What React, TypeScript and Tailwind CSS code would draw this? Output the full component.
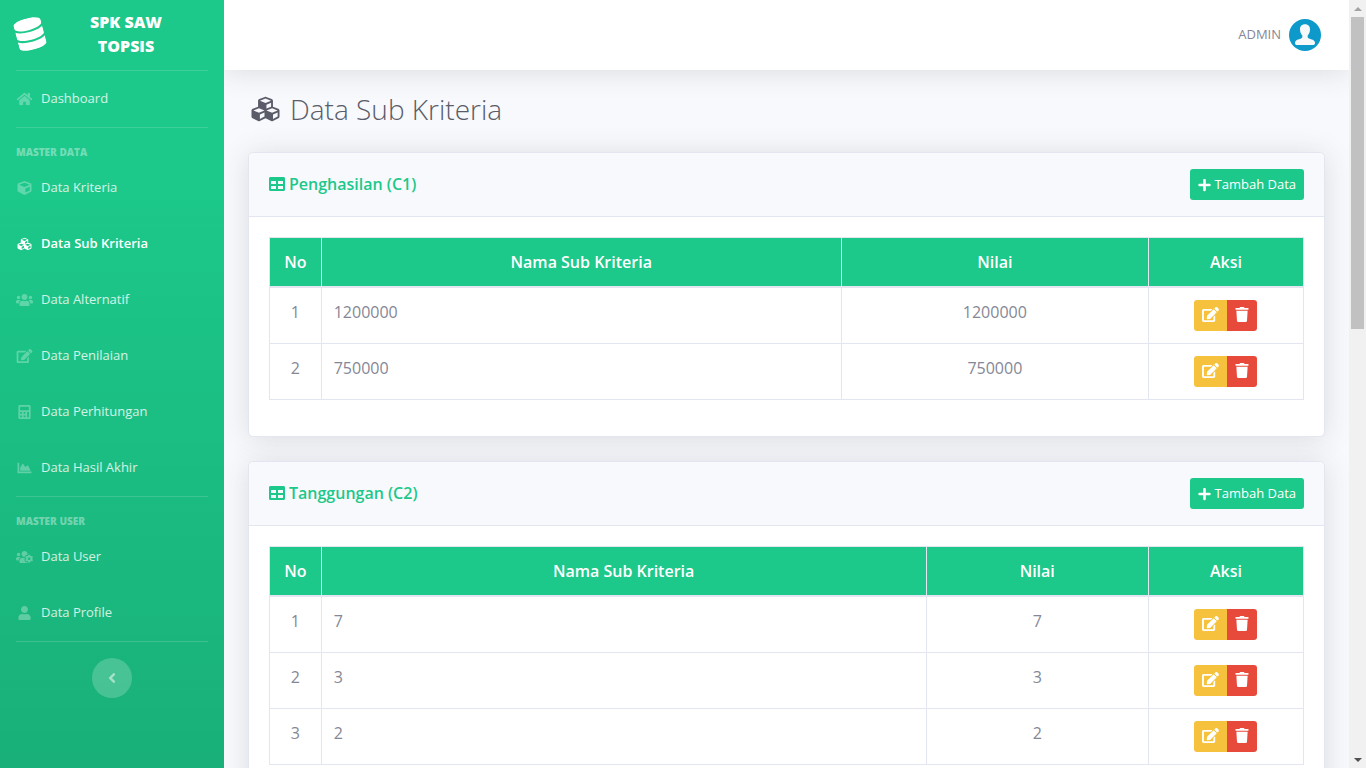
import type { ReactNode } from "react";
import type { IconType } from "react-icons";
import {
  FaAngleLeft,
  FaCalculator,
  FaChartArea,
  FaCube,
  FaCubes,
  FaDatabase,
  FaEdit,
  FaHome,
  FaPlus,
  FaTable,
  FaTrash,
  FaUser,
  FaUsers,
  FaUsersCog,
} from "react-icons/fa";

type SubKriteria = { nama: string; nilai: string };

type Kriteria = {
  title: string;
  namaCol: string;
  rows: SubKriteria[];
};

const kriteria: Kriteria[] = [
  {
    title: "Penghasilan (C1)",
    namaCol: "w-[50.3%]",
    rows: [
      { nama: "1200000", nilai: "1200000" },
      { nama: "750000", nilai: "750000" },
    ],
  },
  {
    title: "Tanggungan (C2)",
    namaCol: "w-[58.5%]",
    rows: [
      { nama: "7", nilai: "7" },
      { nama: "3", nilai: "3" },
      { nama: "2", nilai: "2" },
    ],
  },
];

function Divider() {
  return <hr className="mx-4 border-white/15" />;
}

function Heading({ children }: { children: ReactNode }) {
  return (
    <div className="mt-4 px-4 text-[10px] leading-4 font-extrabold text-white/40 uppercase">
      {children}
    </div>
  );
}

function NavItem({ icon: Icon, label, active = false }: { icon: IconType; label: string; active?: boolean }) {
  return (
    <li>
      <a
        href="#"
        className={
          active
            ? "flex h-14 items-center gap-2 px-4 text-[13px] font-semibold text-white"
            : "flex h-14 items-center gap-2 px-4 text-[13px] text-white/80"
        }
      >
        <Icon className={active ? "h-[14px] w-[17px]" : "h-[14px] w-[17px] text-white/30"} />
        {label}
      </a>
    </li>
  );
}

function Sidebar() {
  return (
    <nav className="w-56 shrink-0 bg-[linear-gradient(180deg,#1cc88a_24%,#19b079_100%)]">
      <a href="#" className="flex h-[70px] items-center px-4 pb-0.5 text-white">
        <FaDatabase className="h-8 w-7 shrink-0 -rotate-15" />
        <span className="mx-4 w-[132px] text-center text-base leading-6 font-extrabold uppercase">
          SPK SAW TOPSIS
        </span>
      </a>
      <Divider />
      <ul>
        <NavItem icon={FaHome} label="Dashboard" />
      </ul>
      <Divider />
      <Heading>Master Data</Heading>
      <ul>
        <NavItem icon={FaCube} label="Data Kriteria" />
        <NavItem icon={FaCubes} label="Data Sub Kriteria" active />
        <NavItem icon={FaUsers} label="Data Alternatif" />
        <NavItem icon={FaEdit} label="Data Penilaian" />
        <NavItem icon={FaCalculator} label="Data Perhitungan" />
        <NavItem icon={FaChartArea} label="Data Hasil Akhir" />
      </ul>
      <Divider />
      <Heading>Master User</Heading>
      <ul>
        <NavItem icon={FaUsersCog} label="Data User" />
        <NavItem icon={FaUser} label="Data Profile" />
      </ul>
      <Divider />
      <button
        type="button"
        aria-label="Toggle sidebar"
        className="mx-auto mt-4 flex size-10 items-center justify-center rounded-full bg-white/20 text-white/50"
      >
        <FaAngleLeft className="size-4" />
      </button>
    </nav>
  );
}

function Avatar() {
  return (
    <svg viewBox="0 0 32 32" className="size-8">
      <circle cx="16" cy="16" r="16" fill="#0d9acb" />
      <path
        fill="#f7f8fa"
        d="M16 5.2c-3.4 0-5.3 2.4-5 5.6.2 2.400.9 4.300 2.300 5.700.3 1.500-.1 2.500-1.300 3-2.600 1.100-5.300 1.400-5.900 3.500-.3 1.200 0 2.200.9 3h18c.9-.8 1.200-1.800.9-3-.6-2.100-3.300-2.400-5.900-3.500-1.200-.5-1.600-1.500-1.300-3 1.400-1.400 2.100-3.300 2.300-5.700.3-3.200-1.600-5.600-5-5.600z"
      />
    </svg>
  );
}

function Topbar() {
  return (
    <header className="relative flex h-[70px] shrink-0 items-center justify-end bg-white px-7 shadow-[0_2px_28px_rgba(58,59,69,0.15)]">
      <a href="#" className="flex items-center gap-2 text-[13px] text-[#858796] uppercase">
        Admin
        <Avatar />
      </a>
    </header>
  );
}

function KriteriaCard({ title, namaCol, rows }: Kriteria) {
  const th = "border border-b-2 border-[#e3e6f0] p-3 text-center font-semibold";
  const td = "border border-[#e3e6f0] p-3 align-top";

  return (
    <section className="mb-6 rounded-[5px] border border-[#e3e6f0] bg-white shadow-[0_2px_28px_rgba(58,59,69,0.15)]">
      <div className="flex items-center justify-between rounded-t-[5px] border-b border-[#e3e6f0] bg-[#f8f9fc] px-5 py-4">
        <h2 className="flex items-center gap-1 pb-0.5 text-base leading-5 font-semibold text-[#1cc88a]">
          <FaTable className="size-4" />
          {title}
        </h2>
        <a
          href="#"
          className="flex h-[31px] items-center gap-1 rounded-[3px] bg-[#1cc88a] px-2 text-[13px] text-white"
        >
          <FaPlus className="h-[14px] w-[13px]" />
          Tambah Data
        </a>
      </div>
      <div className="p-5">
        <table className="mb-4 w-full table-fixed border-collapse text-base leading-6 text-[#858796]">
          <colgroup>
            <col className="w-[5%]" />
            <col className={namaCol} />
            <col />
            <col className="w-[15%]" />
          </colgroup>
          <thead className="bg-[#1cc88a] text-white">
            <tr>
              <th className={th}>No</th>
              <th className={th}>Nama Sub Kriteria</th>
              <th className={th}>Nilai</th>
              <th className={th}>Aksi</th>
            </tr>
          </thead>
          <tbody>
            {rows.map((row, i) => (
              <tr key={row.nama}>
                <td className={`${td} text-center`}>{i + 1}</td>
                <td className={td}>{row.nama}</td>
                <td className={`${td} text-center`}>{row.nilai}</td>
                <td className={td}>
                  <div className="flex justify-center text-white">
                    <a
                      href="#"
                      aria-label="Edit Data"
                      className="flex h-[31px] w-[33px] items-center justify-center rounded-l-[3px] bg-[#f6c23e] pb-0.5"
                    >
                      <FaEdit className="h-[15px] w-[17px]" />
                    </a>
                    <a
                      href="#"
                      aria-label="Hapus Data"
                      className="flex h-[31px] w-[30px] items-center justify-center rounded-r-[3px] bg-[#e74a3b] pb-0.5"
                    >
                      <FaTrash className="h-[15px] w-[14px]" />
                    </a>
                  </div>
                </td>
              </tr>
            ))}
          </tbody>
        </table>
      </div>
    </section>
  );
}

function Scrollbar() {
  return (
    <div aria-hidden="true" className="flex w-[17px] shrink-0 flex-col items-center bg-[#f1f1f1]">
      <div className="flex h-[17px] shrink-0 items-center">
        <svg viewBox="0 0 8 4" className="h-1 w-2">
          <path d="M4 0l4 4H0z" fill="#a3a3a3" />
        </svg>
      </div>
      <div className="flex-1">
        <div className="h-[42.5%] w-[13px] bg-[#c1c1c1]" />
      </div>
      <div className="flex h-[17px] shrink-0 items-center">
        <svg viewBox="0 0 8 4" className="h-1 w-2">
          <path d="M0 0h8L4 4z" fill="#505050" />
        </svg>
      </div>
    </div>
  );
}

export default function App() {
  return (
    <div className="flex h-screen overflow-hidden bg-[#f8f9fc] font-['Open_Sans',sans-serif]">
      <Sidebar />
      <div className="min-w-0 flex-1 overflow-y-auto [scrollbar-width:none]">
        <Topbar />
        <main className="px-6 pt-6">
          <h1 className="mb-7 flex items-center gap-[7px] text-[28px] leading-[30px] font-light text-[#5a5c69]">
            <FaCubes className="h-7 w-[35px]" />
            Data Sub Kriteria
          </h1>
          {kriteria.map((item) => (
            <KriteriaCard key={item.title} {...item} />
          ))}
        </main>
      </div>
      <Scrollbar />
    </div>
  );
}
